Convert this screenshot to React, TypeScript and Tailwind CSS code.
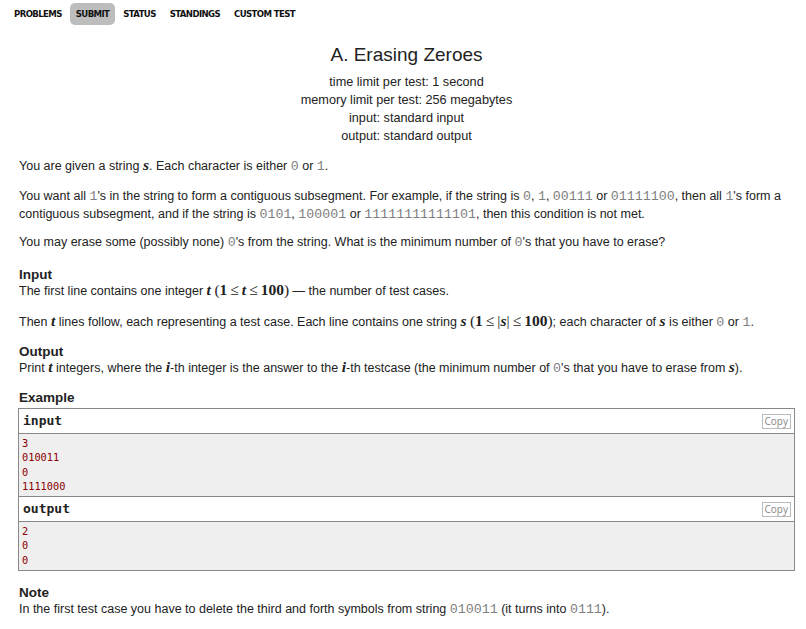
import React from 'react';

const NAV = ['PROBLEMS', 'SUBMIT', 'STATUS', 'STANDINGS', 'CUSTOM TEST'];

function Tt({ children }: { children: React.ReactNode }) {
  return <span className="font-['Liberation_Mono',monospace] text-[13.3px] leading-none text-[#808080]">{children}</span>;
}

function M({ children }: { children: React.ReactNode }) {
  return <span className="font-['Liberation_Serif',serif] text-[15.5px] leading-none font-bold italic">{children}</span>;
}

function R({ children }: { children: React.ReactNode }) {
  return <span className="font-['Liberation_Serif',serif] text-[15.5px] leading-none">{children}</span>;
}

function Le() {
  return <span className="mx-[3px]">≤</span>;
}

function SampleBlock({ title, lines }: { title: string; lines: string[] }) {
  return (
    <div>
      <div className="flex h-[25px] items-center justify-between border-b border-[#888] bg-white pl-[4px] pr-[3px]">
        <span className="font-['DejaVu_Sans_Mono',monospace] text-[13px] font-bold text-[#222]">{title}</span>
        <span className="border border-[#bbb] px-[2px] font-['Open_Sans',sans-serif] text-[10px] leading-[13px] text-[#888]">Copy</span>
      </div>
      <div className="bg-[#efefef] px-[3px] pt-[2px] pb-[3px] font-['DejaVu_Sans_Mono',monospace] text-[10.3px] text-[#8b0000]">
        {lines.map((l, i) => (
          <div key={i} className="h-[14.3px] leading-[14.3px]">
            {l}
          </div>
        ))}
      </div>
    </div>
  );
}

export default function App() {
  return (
    <div className="min-h-[629px] w-[806px] bg-white font-['Liberation_Sans',Arial,sans-serif] text-[#222]">
      {/* Menu */}
      <div className="flex h-[28px] items-center gap-[2px] pl-[8px]">
        {NAV.map((n) => (
          <span
            key={n}
            className={
              "rounded-[5px] px-[6px] py-[4px] font-['DejaVu_Sans_Condensed',sans-serif] text-[9.5px] font-bold tracking-[-0.6px] text-[#111] " +
              (n === 'SUBMIT' ? 'bg-[#bdbdbd]' : '')
            }
          >
            {n}
          </span>
        ))}
      </div>

      <div className="pl-[18px] pr-[11px]">
        {/* Header */}
        <div className="mt-[16px] text-center">
          <div className="text-[19px] leading-[22px]">A. Erasing Zeroes</div>
          <div className="mt-[7px] text-[12.7px] leading-[18px]">
            <div>time limit per test: 1 second</div>
            <div>memory limit per test: 256 megabytes</div>
            <div>input: standard input</div>
            <div>output: standard output</div>
          </div>
        </div>

        {/* Legend */}
        <div className="pl-[1px] text-[12.5px] leading-[18px]">
          <p className="mt-[12px]">
            You are given a string <M>s</M>. Each character is either <Tt>0</Tt> or <Tt>1</Tt>.
          </p>
          <p className="mt-[12px]">
            You want all <Tt>1</Tt>'s in the string to form a contiguous subsegment. For example, if the string is <Tt>0</Tt>,{' '}
            <Tt>1</Tt>, <Tt>00111</Tt> or <Tt>01111100</Tt>, then all <Tt>1</Tt>'s form a contiguous subsegment, and if the string is{' '}
            <Tt>0101</Tt>, <Tt>100001</Tt> or <Tt>11111111111101</Tt>, then this condition is not met.
          </p>
          <p className="mt-[10px]">
            You may erase some (possibly none) <Tt>0</Tt>'s from the string. What is the minimum number of <Tt>0</Tt>'s that you have to erase?
          </p>

          <div className="mt-[16px] text-[13.5px] font-bold leading-[15px]">Input</div>
          <p>
            The first line contains one integer <M>t</M>{' '}
            <R>
              (<b>1</b>
              <Le />
            </R>
            <M>t</M>
            <R>
              <Le />
              <b>100</b>)
            </R>{' '}
            — the number of test cases.
          </p>
          <p className="mt-[13px]">
            Then <M>t</M> lines follow, each representing a test case. Each line contains one string <M>s</M>{' '}
            <R>
              (<b>1</b>
              <Le />|
            </R>
            <M>s</M>
            <R>
              |<Le />
              <b>100</b>)
            </R>
            ; each character of <M>s</M> is either <Tt>0</Tt> or <Tt>1</Tt>.
          </p>

          <div className="mt-[13px] text-[13.5px] font-bold leading-[15px]">Output</div>
          <p>
            Print <M>t</M> integers, where the <M>i</M>-th integer is the answer to the <M>i</M>-th testcase (the minimum number of{' '}
            <Tt>0</Tt>'s that you have to erase from <M>s</M>).
          </p>

          <div className="mt-[13px] text-[13.5px] font-bold leading-[16px]">Example</div>
        </div>

        {/* Sample tests */}
        <div className="mt-[2px] w-[777px] border border-[#888]">
          <SampleBlock title="input" lines={['3', '010011', '0', '1111000']} />
          <div className="border-t border-[#888]">
            <SampleBlock title="output" lines={['2', '0', '0']} />
          </div>
        </div>

        {/* Note */}
        <div className="pl-[1px] text-[12.5px] leading-[18px]">
          <div className="mt-[14px] text-[13.5px] font-bold leading-[15px]">Note</div>
          <p>
            In the first test case you have to delete the third and forth symbols from string <Tt>010011</Tt> (it turns into <Tt>0111</Tt>).
          </p>
        </div>
      </div>
    </div>
  );
}
